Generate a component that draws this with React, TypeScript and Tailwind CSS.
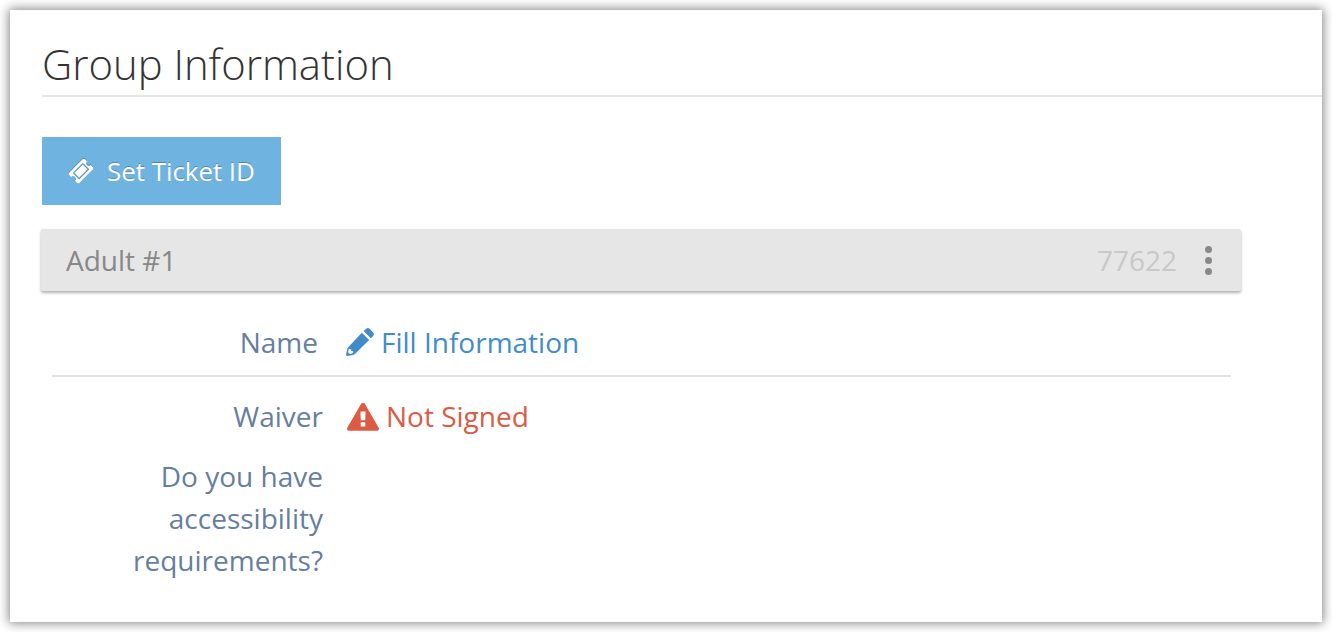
const iconPaths = {
  ticket: {
    viewBox: '0 -1536 1792 1792',
    flip: true,
    d: 'M1024 1084l316 -316l-572 -572l-316 316zM813 105l618 618q19 19 19 45t-19 45l-362 362q-18 18 -45 18t-45 -18l-618 -618q-19 -19 -19 -45t19 -45l362 -362q18 -18 45 -18t45 18zM1702 742l-907 -908q-37 -37 -90.5 -37t-90.5 37l-126 126q56 56 56 136t-56 136t-136 56t-136 -56l-125 126q-37 37 -37 90.5t37 90.5l907 906q37 37 90.5 37t90.5 -37l125 -125q-56 -56 -56 -136t56 -136t136 -56t136 56l126 -125q37 -37 37 -90.5t-37 -90.5z',
  },
  pencil: {
    viewBox: '0 0 28 28',
    flip: false,
    d: 'M20.2 0.8q1.7-1.5 3.4 0l3.6 3.8q1.4 1.7 0 3.4l-2.4 2.3l-7.2-7.2zM15.8 4.7l7.3 7.3l-14.2 14q-0.8 0.7-1.9 0.9l-5.6 1q-1.5 0.2-1.3-1.3l1-5.4q0.2-1 0.9-1.8zM2.9 20.7l-0.8 3.4q0.5 1.5 2 1.8l2.8-0.8l0.3-1.8l-1.9-0.2l-0.3-1.8z',
  },
  warning: {
    viewBox: '0 -1536 1792 1792',
    flip: true,
    d: 'M1024 161v190q0 14 -9.5 23.5t-22.5 9.5h-192q-13 0 -22.5 -9.5t-9.5 -23.5v-190q0 -14 9.5 -23.5t22.5 -9.5h192q13 0 22.5 9.5t9.5 23.5zM1022 535l18 459q0 12 -10 19q-13 11 -24 11h-220q-11 0 -24 -11q-10 -7 -10 -21l17 -457q0 -10 10 -16.5t24 -6.5h185q14 0 23.5 6.5t10.5 16.5zM1008 1469l768 -1408q35 -63 -2 -126q-17 -29 -46.5 -46t-63.5 -17h-1536q-34 0 -63.5 17t-46.5 46q-37 63 -2 126l768 1408q17 31 47 49t65 18t65 -18t47 -49z',
  },
};

function Icon({ name, className }: { name: keyof typeof iconPaths; className: string }) {
  const { viewBox, flip, d } = iconPaths[name];

  // Font glyphs have their y axis pointing up, so those get flipped
  return (
    <svg viewBox={viewBox} preserveAspectRatio="none" className={className} fill="currentColor" aria-hidden="true">
      <path fillRule="evenodd" transform={flip ? 'scale(1 -1)' : undefined} d={d} />
    </svg>
  );
}

export default function App() {
  return (
    <div className="h-[632px] overflow-hidden bg-white p-[10px] font-['Open_Sans',sans-serif] text-[28px] leading-[42px]">
      <div className="h-[612px] w-[1312px] bg-white pl-8 pt-[26px] shadow-[0_0_10px_1px_rgba(0,0,0,0.5)]">
        <h1 className="h-[61px] border-b-2 border-[#e5e5e5] text-[41.8px] font-light leading-[56px] text-[#333]">
          Group Information
        </h1>

        <button className="mt-10 flex h-[68px] w-[239px] items-center bg-[#6fb3e0] pl-[26px] text-[26px] text-white [text-shadow:0_-1px_0_rgba(0,0,0,0.25)]">
          <Icon name="ticket" className="mr-[13px] h-[26px] w-[26px] drop-shadow-[0_-1px_0_rgba(0,0,0,0.25)]" />
          <span className="tracking-[-0.06px]">Set Ticket ID</span>
        </button>

        <div className="-ml-px mt-6 flex h-[62px] w-[1200px] items-center rounded-[2px] bg-[#e6e6e6] pl-[25px] pr-[29px] text-[#888] shadow-[0_2px_3px_rgba(0,0,0,0.3)]">
          <span>Adult #1</span>
          <span className="ml-auto text-[#c8c8c8]">77622</span>
          <button className="ml-7 flex flex-col gap-[4px]" aria-label="More actions">
            <span className="size-[7px] rounded-full bg-[#888]" />
            <span className="size-[7px] rounded-full bg-[#888]" />
            <span className="size-[7px] rounded-full bg-[#888]" />
          </button>
        </div>

        <div className="ml-[10px] w-[1179px] text-[#667e9f]">
          <div className="flex h-[86px] items-center border-b-2 border-[#e2e2e2] pt-[18px]">
            <div className="w-[266px] text-right">Name</div>
            <a className="ml-7 flex items-center text-[#428bca]">
              <Icon name="pencil" className="mr-[7px] size-[28px]" />
              Fill Information
            </a>
          </div>

          <div className="mt-[18px] flex items-center">
            <div className="w-[271px] text-right">Waiver</div>
            <div className="ml-6 flex items-center text-[#dd5a43]">
              <Icon name="warning" className="mr-[7px] mt-[3px] h-[30px] w-[32px]" />
              Not Signed
            </div>
          </div>

          <div className="mt-[18px] w-[271px] pl-20 text-right">Do you have accessibility requirements?</div>
        </div>
      </div>
    </div>
  );
}
